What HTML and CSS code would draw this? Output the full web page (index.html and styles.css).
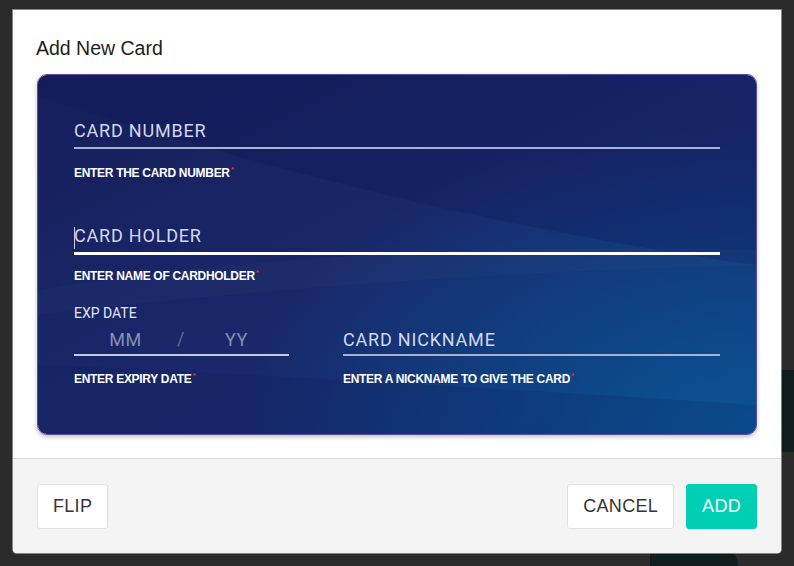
FILE: index.html
```html
<!DOCTYPE html>
<html lang="en">
<head>
    <meta charset="UTF-8">
    <meta name="viewport" content="width=device-width, initial-scale=1.0">
    <title>Add New Card</title>
    <link rel="stylesheet" href="styles.css">
</head>
<body>
    <div class="backdrop">
        <div class="bg-shape bg-shape-side"></div>
        <div class="bg-shape bg-shape-foot"></div>

        <div class="modal">
            <div class="modal-body">
                <h1 class="modal-title">Add New Card</h1>

                <div class="card">
                    <svg class="card-art" viewBox="0 0 718 359" preserveAspectRatio="none">
                        <defs>
                            <linearGradient id="cardBase" x1="0" y1="0" x2="1" y2="1">
                                <stop offset="0" stop-color="#161e5b"/>
                                <stop offset="0.5" stop-color="#19286a"/>
                                <stop offset="1" stop-color="#122e70"/>
                            </linearGradient>
                            <radialGradient id="cardGlow" cx="718" cy="359" r="520" gradientUnits="userSpaceOnUse" gradientTransform="translate(718 359) scale(1 0.6) translate(-718 -359)">
                                <stop offset="0" stop-color="#0a5596" stop-opacity="1"/>
                                <stop offset="1" stop-color="#0a5596" stop-opacity="0"/>
                            </radialGradient>
                        </defs>
                        <rect width="718" height="359" fill="url(#cardBase)"/>
                        <rect width="718" height="359" fill="url(#cardGlow)"/>
                        <!-- upper swoosh: darker cap over the top right -->
                        <path d="M0 0 H718 V190 Q360 140 0 20 Z" fill="#0c1250" opacity="0.22"/>
                        <!-- lower swoosh -->
                        <path d="M0 215 Q300 165 718 175 V190 Q330 200 0 240 Z" fill="#ffffff" opacity="0.02"/>
                        <path d="M0 290 Q250 300 718 330 V359 H0 Z" fill="#0c1250" opacity="0.15"/>
                    </svg>

                    <div class="field">
                        <input class="field-input" type="text" placeholder="CARD NUMBER">
                        <p class="field-help">ENTER THE CARD NUMBER<span class="req">*</span></p>
                    </div>

                    <div class="field field-holder">
                        <div class="field-wrap">
                            <span class="caret"></span>
                            <input class="field-input is-focused" type="text" placeholder="CARD HOLDER">
                        </div>
                        <p class="field-help">ENTER NAME OF CARDHOLDER<span class="req">*</span></p>
                    </div>

                    <div class="field-row">
                        <div class="field">
                            <label class="field-label">EXP DATE</label>
                            <div class="exp-inputs">
                                <input class="exp-part exp-month" type="text" placeholder="MM">
                                <span class="exp-sep">/</span>
                                <input class="exp-part exp-year" type="text" placeholder="YY">
                            </div>
                            <p class="field-help">ENTER EXPIRY DATE<span class="req">*</span></p>
                        </div>
                        <div class="field">
                            <input class="field-input field-input-row" type="text" placeholder="CARD NICKNAME">
                            <p class="field-help">ENTER A NICKNAME TO GIVE THE CARD<span class="req">*</span></p>
                        </div>
                    </div>
                </div>
            </div>

            <div class="modal-footer">
                <button class="btn">FLIP</button>
                <div class="footer-actions">
                    <button class="btn">CANCEL</button>
                    <button class="btn btn-primary">ADD</button>
                </div>
            </div>
        </div>
    </div>
</body>
</html>
```

FILE: styles.css
```css
body {
    margin: 0;
    padding: 0;
    background-color: #2b2b2b;
    font-family: 'Liberation Sans', Arial, sans-serif;
    overflow: hidden;
}

.backdrop {
    position: relative;
    height: 566px;
    padding: 10px 0 0 13px;
    box-sizing: border-box;
}

/* dark teal bits of the page behind the dialog */
.bg-shape {
    position: absolute;
    background-color: #0f1d1e;
}

.bg-shape-side {
    left: 781px;
    top: 370px;
    width: 13px;
    height: 82px;
}

.bg-shape-foot {
    left: 650px;
    top: 540px;
    width: 88px;
    height: 26px;
    border-top-right-radius: 30px 26px;
}

.modal {
    position: relative;
    width: 768px;
    background-color: #fff;
    border-radius: 0 0 4px 4px;
    box-shadow: 0 0 0 1px rgba(210, 210, 210, 0.55);
    overflow: hidden;
}

.modal-body {
    padding: 26px 24px 23px;
    border-bottom: 1px solid #d9d9d9;
}

.modal-title {
    margin: 0 0 14px -1px;
    font-size: 19.5px;
    line-height: 24px;
    font-weight: normal;
    color: #1e1e1e;
}

/* the card face */
.card {
    position: relative;
    height: 361px;
    box-sizing: border-box;
    padding: 42px 36px 0;
    border: 1px solid #5a4ea6;
    border-radius: 10px;
    overflow: hidden;
    box-shadow: 0 2px 4px rgba(0, 0, 0, 0.25);
}

.card-art {
    position: absolute;
    top: 0;
    left: 0;
    width: 100%;
    height: 100%;
}

.field {
    position: relative;
}

.field-holder {
    margin-top: 42px;
}

.field-wrap {
    position: relative;
}

.caret {
    position: absolute;
    left: 0;
    top: 5px;
    width: 1px;
    height: 22px;
    background-color: #c9cde0;
}

.field-input,
.exp-part {
    display: block;
    width: 100%;
    height: 32px;
    box-sizing: border-box;
    margin: 0;
    padding: 0 0 4px;
    border: none;
    border-bottom: 2px solid #a9b1d1;
    background: transparent;
    outline: none;
    font-family: 'Roboto', 'Liberation Sans', sans-serif;
    font-size: 18px;
    letter-spacing: 0.8px;
    color: #dde1ef;
}

.field-input::placeholder {
    color: #d3d7e9;
    opacity: 1;
}

.field-input.is-focused {
    border-bottom-color: #fff;
    box-shadow: 0 1px 0 #fff;
}

.field-input-row {
    height: 30px;
    padding-bottom: 2px;
}

.field-help {
    margin: 17px 0 0;
    font-size: 12px;
    line-height: 14px;
    font-weight: bold;
    letter-spacing: -0.3px;
    color: #fff;
}

/* the focused line is thicker, so its hint sits a little closer */
.field-holder .field-help {
    margin-top: 15px;
}

.req {
    display: inline-block;
    vertical-align: top;
    margin-left: 1px;
    font-size: 8px;
    line-height: 8px;
    color: #ff2020;
}

.field-row {
    display: grid;
    grid-template-columns: 215px 1fr;
    column-gap: 54px;
    align-items: end;
    margin-top: 22px;
}

.field-row .field-help {
    margin-top: 16px;
}

.field-label {
    display: block;
    margin-bottom: 5px;
    font-family: 'Roboto', 'Liberation Sans', sans-serif;
    font-size: 14px;
    line-height: 16px;
    color: #e4e7f2;
}

.exp-inputs {
    display: flex;
    align-items: flex-start;
    border-bottom: 2px solid #c3c9e0;
}

.exp-part {
    height: 28px;
    padding-bottom: 2px;
    border-bottom: none;
    text-align: center;
    letter-spacing: 0.5px;
}

.exp-part::placeholder {
    color: #878fb2;
    opacity: 1;
}

.exp-month {
    width: 103px;
}

.exp-year {
    flex: 1;
}

.exp-sep {
    width: 7px;
    line-height: 26px;
    font-family: 'Roboto', 'Liberation Sans', sans-serif;
    font-size: 18px;
    color: #5f6996;
}

/* footer with the buttons */
.modal-footer {
    display: flex;
    justify-content: space-between;
    align-items: center;
    padding: 25px 24px 24px;
    background-color: #f4f4f4;
}

.footer-actions {
    display: flex;
    gap: 12px;
}

.btn {
    height: 45px;
    padding: 0 15px;
    border: 1px solid #e2e2e2;
    border-radius: 3px;
    background-color: #fff;
    font-family: 'Liberation Sans', Arial, sans-serif;
    font-size: 18px;
    letter-spacing: 0.3px;
    color: #353535;
    cursor: pointer;
}

.btn-primary {
    border-color: #00cfb4;
    background-color: #00cfb4;
    color: #fff;
}
```
